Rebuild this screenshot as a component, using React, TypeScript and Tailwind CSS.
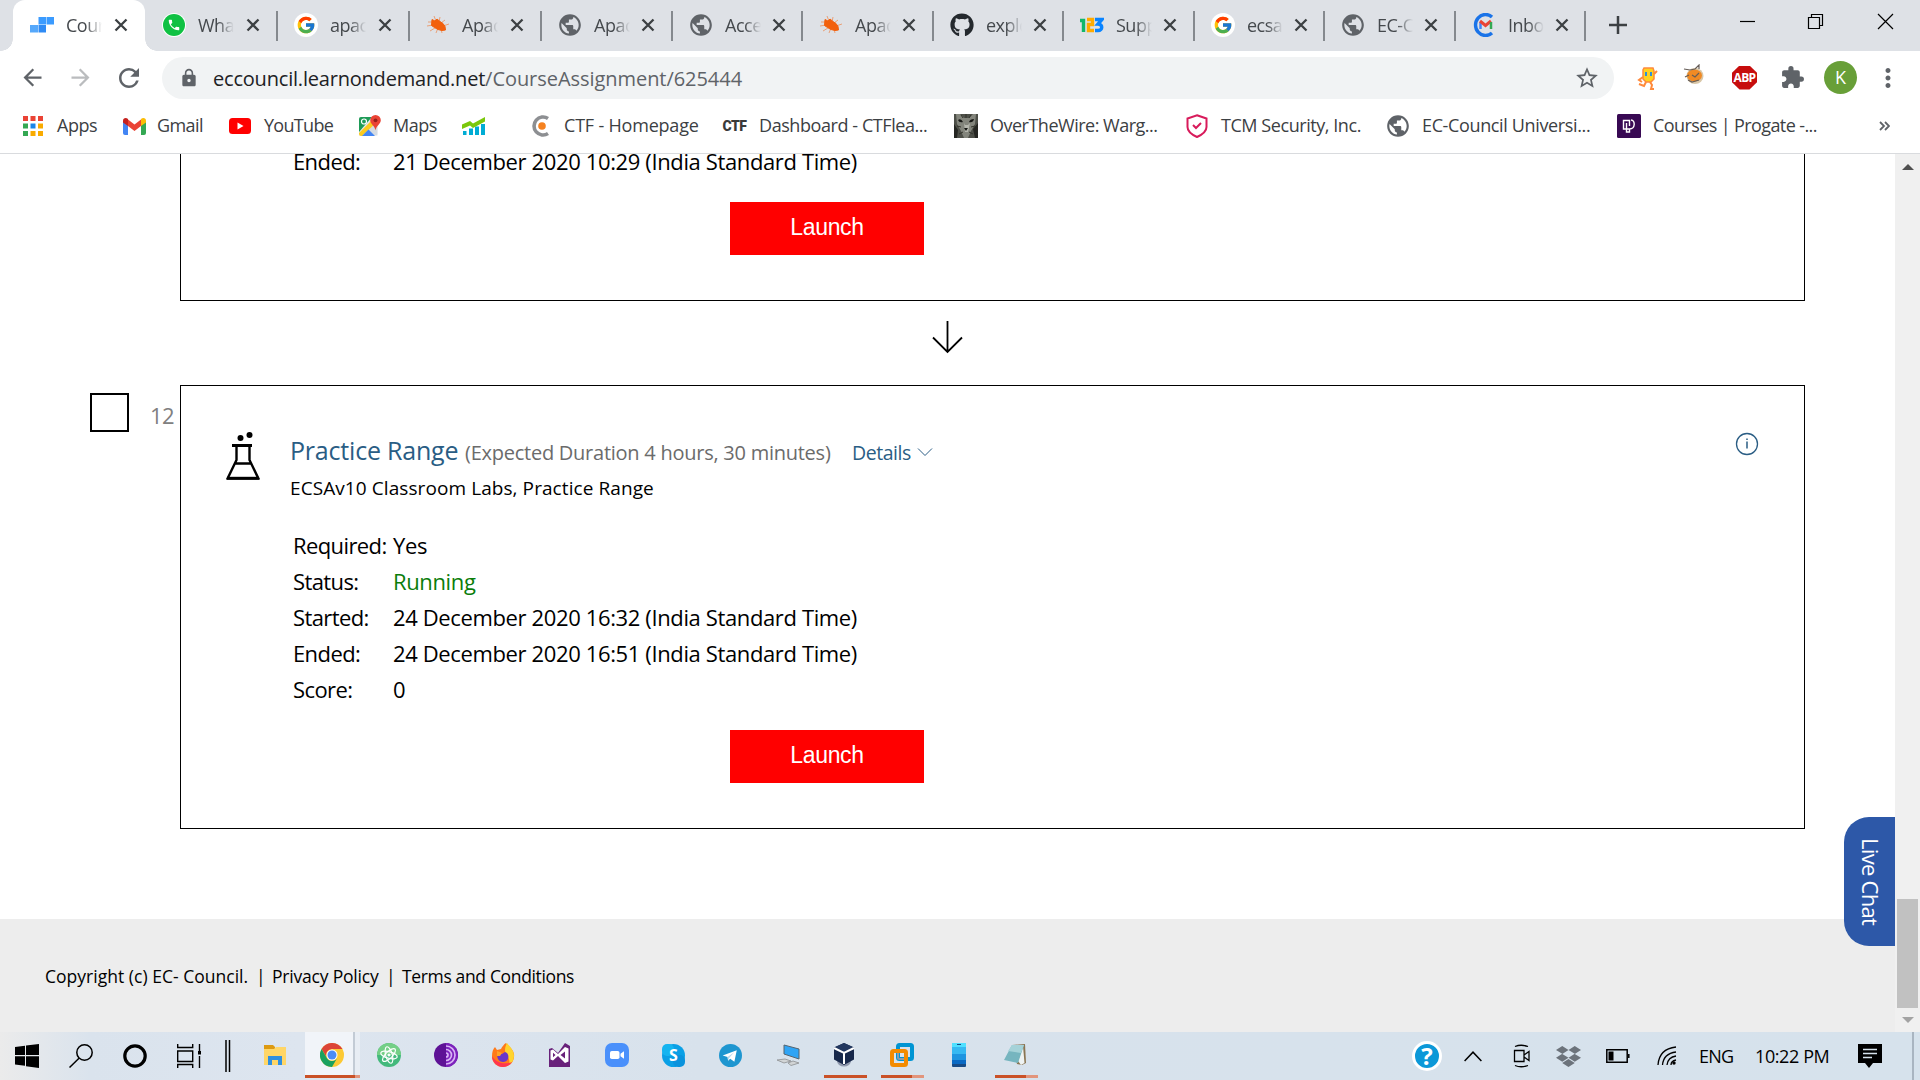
import React from 'react';
import { FaGithub, FaDropbox } from 'react-icons/fa';
import { FcGoogle } from 'react-icons/fc';
import { MdArrowBack, MdArrowForward, MdRefresh, MdLock, MdStarBorder, MdMoreVert, MdPublic, MdExtension } from 'react-icons/md';

const Blocks = () => (
  <svg width="24" height="18" viewBox="0 0 24 18">
    <path d="M8.500 1H16v7.500H8.500zM16.500 1H24v7.500h-7.500z" fill="#3b9bff" />
    <path d="M8.500 9H16v7.500H8.500z" fill="#2f8bf5" />
    <path d="M0 9h8v7.500H0z" fill="#55a8fb" />
  </svg>
);
const WhatsApp = () => (
  <span className="flex size-[22px] items-center justify-center rounded-full bg-[#0fc143] ring-1 ring-white">
    <svg width="14" height="14" viewBox="0 0 24 24" fill="#fff"><path d="M6.6 10.8c1.4 2.8 3.8 5.1 6.6 6.6l2.2-2.2c.3-.3.7-.4 1-.2 1.1.4 2.300.6 3.600.6.6 0 1 .4 1 1V20c0 .6-.4 1-1 1C10.600 21 3 13.400 3 4c0-.6.4-1 1-1h3.500c.6 0 1 .4 1 1 0 1.200.2 2.400.6 3.600.1.3 0 .7-.2 1z" /></svg>
  </span>
);
const Google = () => (
  <span className="flex size-6 items-center justify-center rounded-full bg-white"><FcGoogle size={20} /></span>
);
const Mite = () => (
  <svg width="24" height="24" viewBox="0 0 24 24" fill="#f2600c" stroke="#f2600c">
    <path d="M6 6.500l3 1.500 2-2 3 2.500 3 2 2 3 .5 3.500-3.500.5-4-1-3.500-2-3-2z" strokeWidth="1" />
    <path d="M2 9h5M1 13l6-1M4 18l5-3M10 20l2-5M8 3l2 5M14 4l-1 5M19 7l-4 3M23 11l-6 2M16 20l-1-4" strokeWidth="1" opacity=".5" fill="none" />
  </svg>
);
const Globe = () => <MdPublic size={26} color="#5f6368" className="shrink-0" />;
const OneTwoThree = () => (
  <svg width="24" height="16" viewBox="0 0 24 16" fill="none" strokeWidth="3.400">
    <path d="M0 3.500h3.500V15" stroke="#12b76a" />
    <path d="M7 2.500h5.500v5H8.500v6H14" stroke="#ffab00" />
    <path d="M15 2.500h7l-4 4.500c5 0 5 6.500 0 6.500h-3" stroke="#0a84ff" />
  </svg>
);
const ClientMail = () => (
  <svg width="22" height="24" viewBox="0 0 22 24" fill="none">
    <path d="M19 4a10 10.500 0 1 0 0 16" stroke="#1a73e8" strokeWidth="3.400" />
    <path d="M7.500 16V9" stroke="#4285f4" strokeWidth="2.500" />
    <path d="M7 8l5.500 4.500L18 8" stroke="#ea4335" strokeWidth="3" />
    <path d="M18 16V9" stroke="#34a853" strokeWidth="2.500" />
  </svg>
);
const Close = () => (
  <svg width="14" height="14" viewBox="0 0 14 14" fill="none" stroke="#3c4043" strokeWidth="2.300"><path d="M1.500 1.500l11 11M12.500 1.500l-11 11" /></svg>
);

const tabs = [
  { t: 'Cours', icon: <Blocks />, w: 'w-[132px]', active: true },
  { t: 'What', icon: <WhatsApp />, w: 'w-[132px]' },
  { t: 'apach', icon: <Google />, w: 'w-[132px]' },
  { t: 'Apach', icon: <Mite />, w: 'w-[132px]' },
  { t: 'Apach', icon: <Globe />, w: 'w-[131px]' },
  { t: 'Acces', icon: <Globe />, w: 'w-[130px]' },
  { t: 'Apach', icon: <Mite />, w: 'w-[131px]' },
  { t: 'explo', icon: <FaGithub size={24} color="#24292e" />, w: 'w-[130px]' },
  { t: 'Supp', icon: <OneTwoThree />, w: 'w-[131px]' },
  { t: 'ecsa', icon: <Google />, w: 'w-[130px]' },
  { t: 'EC-C', icon: <Globe />, w: 'w-[131px]' },
  { t: 'Inbox', icon: <ClientMail />, w: 'w-[130px]' },
];

function TabStrip() {
  return (
    <div className="flex h-[51px] bg-[#dee1e6] pl-[13px]">
      {tabs.map((tab, i) => (
        <div
          key={i}
          className={`${tab.w} relative flex shrink-0 items-center ${tab.active ? 'rounded-t-[12px] bg-white' : ''}`}
        >
          {tab.active && (
            <>
              <i className="absolute -left-3 bottom-0 size-3 bg-[radial-gradient(circle_at_0_0,transparent_11.500px,#fff_12px)]" />
              <i className="absolute -right-3 bottom-0 size-3 bg-[radial-gradient(circle_at_100%_0,transparent_11.500px,#fff_12px)]" />
            </>
          )}
          <span className="ml-[15px] flex w-[27px] shrink-0 justify-center pb-px">{tab.icon}</span>
          <span className="ml-[11px] w-[36px] overflow-hidden pb-[2px] text-[18px] leading-6 tracking-[-0.500px] whitespace-nowrap text-[#45494d] [mask-image:linear-gradient(to_right,#000_55%,transparent)]">
            {tab.t}
          </span>
          <span className={`mb-px flex shrink-0 ${i > 3 ? 'ml-[11px]' : 'ml-[12px]'}`}><Close /></span>
          {!tab.active && <i className="absolute -right-px top-[11px] h-[30px] w-[2px] bg-[#85898e]" />}
        </div>
      ))}
      <svg className="mt-[16px] ml-[24px]" width="18" height="18" viewBox="0 0 18 18" stroke="#3c4043" strokeWidth="2.500"><path d="M9 0v18M0 9h18" /></svg>
      <svg className="mt-[12px] mr-[26px] ml-auto" width="154" height="20" viewBox="0 0 154 20" fill="none" stroke="#000" strokeWidth="1.200">
        <path d="M0 9.500h15" />
        <path d="M68.500 5.500h11v11h-11zM71.500 5.500v-3h11v11h-3" />
        <path d="M138 2l15 15M153 2l-15 15" />
      </svg>
    </div>
  );
}

const Runner = () => (
  <svg width="22" height="24" viewBox="0 0 22 24">
    <path d="M7 2h9l1 3v8l-3 3H9l-3-3V4z" fill="#ffd21f" stroke="#ff8a3c" strokeWidth="1.500" />
    <path d="M8 6h2v4H8zM13 6h2v4h-2z" fill="#2f8fd8" />
    <path d="M17 8l3-3M6 11l-4 3 3 2M9 16l-2 4-5-2M13 16l2 3-1 4h3" fill="none" stroke="#ff8a3c" strokeWidth="2" />
  </svg>
);
const CookieBug = () => (
  <svg width="22" height="22" viewBox="0 0 22 22">
    <ellipse cx="12" cy="12" rx="8.500" ry="8" fill="#d9c7a8" />
    <ellipse cx="11.500" cy="11.500" rx="7.500" ry="6" fill="#f08a24" />
    <path d="M1 5l6 1 5-1 4-4v4M2 13l4-2M5 16l4 2 7-2M9 11l3 2 4-4" stroke="#665d57" strokeWidth="1.200" fill="none" />
  </svg>
);

function Toolbar() {
  return (
    <div className="flex h-[53px] items-center pl-[19px] text-[#5f6368]">
      <MdArrowBack size={27} className="shrink-0" />
      <MdArrowForward size={27} className="ml-[21px] shrink-0 text-[#babcbe]" />
      <MdRefresh size={30} className="ml-[20px] shrink-0" />
      <div className="mt-px ml-[18px] flex h-[42px] w-[1452px] shrink-0 items-center rounded-full bg-[#f1f3f4] pl-[17px]">
        <MdLock size={20} />
        <span className="ml-[14px] pt-[2px] text-[20px] leading-7 whitespace-nowrap">
          <span className="tracking-[-0.200px] text-[#202124]">eccouncil.learnondemand.net</span>
          <span className="tracking-[-0.050px]">/CourseAssignment/625444</span>
        </span>
        <MdStarBorder size={26} className="mr-[14px] ml-auto" />
      </div>
      <div className="ml-[23px] flex w-[22px] shrink-0"><Runner /></div>
      <div className="-mt-[5px] ml-[24px] flex w-[22px] shrink-0"><CookieBug /></div>
      <span className="ml-[27px] flex h-6 w-[25px] shrink-0 items-center justify-center bg-[#c70d0d] text-[12px] font-bold tracking-[-0.600px] text-white [clip-path:polygon(30%_0,70%_0,100%_30%,100%_70%,70%_100%,30%_100%,0_70%,0_30%)]">
        ABP
      </span>
      <MdExtension size={25} className="ml-[23px] shrink-0" />
      <span className="ml-[19px] flex size-[33px] shrink-0 items-center justify-center rounded-full bg-[#689f38] text-[18px] text-white">K</span>
      <MdMoreVert size={30} className="ml-[16px] shrink-0" />
    </div>
  );
}

const AppsGrid = () => {
  const c = ['#ea4335', '#ea4335', '#ea4335', '#34a853', '#1a85e8', '#f9ab00', '#34a853', '#f9ab00', '#f9ab00'];
  return (
    <svg width="20" height="20" viewBox="0 0 20 20">
      {c.map((f, i) => <rect key={i} x={(i % 3) * 7.5} y={Math.floor(i / 3) * 7.5} width="5" height="5" fill={f} />)}
    </svg>
  );
};
const GmailLogo = () => (
  <svg width="23" height="17" viewBox="0 0 23 17">
    <path d="M0 3h5v14H2a2 2 0 0 1-2-2z" fill="#4285f4" />
    <path d="M18 3h5v12a2 2 0 0 1-2 2h-3z" fill="#34a853" />
    <path d="M5 1.500L11.500 6.500 18 1.500V8l-6.500 5L5 8z" fill="#ea4335" />
    <path d="M0 2.500C0 0 3-.8 5 1v7L0 4.500z" fill="#c5221f" />
    <path d="M23 2.500C23 0 20-.8 18 1v7l5-3.500z" fill="#fbbc04" />
  </svg>
);
const YouTubeLogo = () => (
  <svg width="22" height="16" viewBox="0 0 22 16"><rect width="22" height="16" rx="3.500" fill="#f00" /><path d="M8.500 4.500v7l6-3.500z" fill="#fff" /></svg>
);
const MapsLogo = () => (
  <svg width="23" height="22" viewBox="0 0 23 22">
    <rect x="1" y="2" width="19" height="19" rx="2" fill="#e8eaed" />
    <path d="M1 4q0-2 2-2h11L1 17z" fill="#1e9b57" />
    <path d="M1 18L14 5l4 5L5 21H3q-2 0-2-2z" fill="#fbcb1f" />
    <path d="M5 20L19 7v13z" fill="#d5dbe2" />
    <path d="M4 21l6.500-6.500L17 21z" fill="#4285f4" />
    <circle cx="6" cy="6.500" r="2.500" fill="none" stroke="#fff" strokeWidth="1.200" />
    <path d="M17.500 0a5.300 5.300 0 0 1 5.300 5.300c0 3.500-4.500 5.700-5.300 10-.8-4.300-5.300-6.500-5.300-10A5.300 5.300 0 0 1 17.500 0z" fill="#ea4335" />
    <circle cx="17.500" cy="5.300" r="1.900" fill="#96201b" />
  </svg>
);
const BarsLogo = () => (
  <svg width="23" height="19" viewBox="0 0 23 19">
    <path d="M1 14h3.500v4H1zM7 11.500h4V18H7zM13 9.500h4V18h-4zM19 7h4v11h-4z" fill="#00acd4" />
    <path d="M0 12V7.500l8-3.500 3 2.500L23 0v4.500L11 11 8 8.500z" fill="#7bc80c" />
  </svg>
);
const CtfC = () => (
  <svg width="22" height="22" viewBox="0 0 22 22">
    <path d="M18 3.500a9 9 0 1 0 0 15" fill="none" stroke="#8d8f92" strokeWidth="3.600" />
    <circle cx="12" cy="11" r="3.800" fill="#f58220" />
  </svg>
);
const CtfWord = () => <span className="font-['Roboto'] text-[14px] font-black tracking-[-0.500px] text-[#3a3a3a]">CTF</span>;
const Cat = () => (
  <svg width="24" height="24" viewBox="0 0 24 24">
    <rect width="24" height="24" fill="#4d4f48" />
    <path d="M2 0h4l4 4h5l4-4h3l-1 10-4 7-3 7h-4l-3-7-4-7z" fill="#83857c" />
    <path d="M0 10l4 6-1 8H0zM24 9l-5 6 2 9h3z" fill="#252622" />
    <path d="M10 9l1 9h3l2-9-2 2h-3z" fill="#b4b6ad" />
    <path d="M4 6q3-2 5 2-4 1-5-2zM20 5q-4 0-5 3 4 1 5-3zM10 14h4l-2 3z" fill="#161714" />
    <path d="M7 1l2 3M12 0v4M17 1l-2 3M5 20l4-2M19 20l-4-2M3 12l4 1M21 12l-4 1" stroke="#32332b" />
  </svg>
);
const Shield = () => (
  <svg width="22" height="24" viewBox="0 0 22 24" fill="none" stroke="#d81b5b" strokeWidth="2">
    <path d="M11 1.200l9.500 3.300v8.500c0 4.500-4 7.500-9.500 10C5.500 20.500 1.500 17.500 1.500 13V4.500z" />
    <path d="M7 11l3 3 5-5" />
  </svg>
);
const Progate = () => (
  <svg width="24" height="24" viewBox="0 0 24 24" fill="none" stroke="#fff" strokeWidth="1.400">
    <rect width="24" height="24" rx="1.500" fill="#380953" stroke="none" />
    <path d="M12.500 12V6.500h-6V15h6c6 0 6-9 1.500-9M9.500 9v9h3v-3" />
  </svg>
);

const marks = [
  { t: 'Apps', i: <AppsGrid />, b: 'w-[20px] ml-[23px]', s: 'ml-[14px] w-[40px] tracking-[-0.500px]' },
  { t: 'Gmail', i: <GmailLogo />, b: 'w-[23px] ml-[26px]', s: 'ml-[11px] w-[47px] tracking-[-0.580px]' },
  { t: 'YouTube', i: <YouTubeLogo />, b: 'w-[22px] ml-[25px]', s: 'ml-[13px] w-[70px] tracking-[-0.700px]' },
  { t: 'Maps', i: <MapsLogo />, b: 'w-[23px] ml-[24px]', s: 'ml-[12px] w-[45px] tracking-[-0.450px]' },
  { t: '', i: <BarsLogo />, b: 'w-[23px] ml-[24px]', s: 'w-[20px]' },
  { t: 'CTF - Homepage', i: <CtfC />, b: 'w-[22px] ml-[25px]', s: 'ml-[12px] w-[136px] tracking-[-0.200px]' },
  { t: 'Dashboard - CTFlea...', i: <CtfWord />, b: 'w-[25px] ml-[22px]', s: 'ml-[12px] w-[170px] tracking-[-0.430px]' },
  { t: 'OverTheWire: Warg...', i: <Cat />, b: 'w-[24px] ml-[25px]', s: 'ml-[12px] w-[169px] tracking-[-0.500px]' },
  { t: 'TCM Security, Inc.', i: <Shield />, b: 'w-[22px] ml-[27px]', s: 'ml-[13px] w-[141px] tracking-[-0.440px]' },
  { t: 'EC-Council Universi...', i: <Globe />, b: 'w-[22px] ml-[25px]', s: 'ml-[13px] w-[170px] tracking-[-0.360px]' },
  { t: 'Courses | Progate -...', i: <Progate />, b: 'w-[24px] ml-[25px]', s: 'ml-[12px] w-[166px] tracking-[-0.600px]' },
];

function Bookmarks() {
  return (
    <div className="flex h-[50px] items-center border-b border-[#d9dbde] pb-[5px] text-[18px] leading-6 text-[#3c4043]">
      {marks.map((m, k) => (
        <React.Fragment key={k}>
          <span className={`flex shrink-0 justify-center ${m.b}`}>{m.i}</span>
          <span className={`shrink-0 pb-[2px] whitespace-nowrap ${m.s}`}>{m.t}</span>
        </React.Fragment>
      ))}
      <svg className="mr-[30px] ml-auto" width="11" height="10" viewBox="0 0 11 10" fill="none" stroke="#5f6368" strokeWidth="1.800">
        <path d="M1 1l4 4-4 4M6 1l4 4-4 4" />
      </svg>
    </div>
  );
}

function Row({ k, v, green }: { k: string; v: string; green?: boolean }) {
  return (
    <div className="flex h-9 items-center pl-[3px] text-[22px] tracking-[-0.370px] whitespace-nowrap">
      <span className="w-[100px] tracking-[-0.600px]">{k}</span>
      <span className={green ? 'text-[#0a7d0a]' : ''}>{v}</span>
    </div>
  );
}

const Launch = () => (
  <button className="ml-[440px] block h-[53px] w-[194px] shrink-0 bg-[#ff0000] pb-[2px] font-['Liberation_Sans'] text-[23px] tracking-[-0.300px] text-white">
    Launch
  </button>
);

const Flask = () => (
  <svg width="34" height="48" viewBox="0 0 34 48" fill="none" stroke="#000" strokeWidth="2.400">
    <circle cx="14.500" cy="6" r="3" fill="#000" stroke="none" />
    <circle cx="23.500" cy="3" r="3" fill="#000" stroke="none" />
    <path d="M6 13.500h20" strokeWidth="3" />
    <path d="M10.500 14v14L1.700 46.300h30.600L23.500 28V14M8.500 31.500h17" />
    <path d="M1 46.300h32" strokeWidth="3" />
  </svg>
);

function Page() {
  return (
    <div className="relative flex h-[878px] overflow-hidden bg-white text-black">
      <div className="flex w-[1895px] flex-col">
        <div className="ml-[180px] h-[147px] w-[1625px] shrink-0 border border-t-0 border-black pl-[109px]">
          <div className="-mt-[11px]"><Row k="Ended:" v="21 December 2020 10:29 (India Standard Time)" /></div>
          <div className="mt-[23px]"><Launch /></div>
        </div>
        <div className="flex h-[84px] shrink-0 items-center pl-[932px]">
          <svg className="-mt-[12px]" width="32" height="34" viewBox="0 0 32 34" fill="none" stroke="#000" strokeWidth="1.800">
            <path d="M15.500 1v31M1 17.500L15.500 32 30 17.500" />
          </svg>
        </div>
        <div className="flex shrink-0">
          <span className="mt-[8px] ml-[90px] size-[39px] border-2 border-black" />
          <span className="mt-[12px] ml-[21px] w-[30px] text-[22px] leading-9 tracking-[-0.600px] text-[#808080]">12</span>
          <div className="flex h-[444px] w-[1625px] border border-black pt-[46px] pl-[45px]">
            <div className="w-[64px] shrink-0"><Flask /></div>
            <div className="grow">
              <div className="flex h-9 items-baseline leading-9 whitespace-nowrap">
                <span className="w-[175px] text-[25px] tracking-[-0.200px] text-[#2a5d84]">Practice Range</span>
                <span className="w-[387px] text-[20px] tracking-[-0.250px] text-[#6b6b6b]">(Expected Duration 4 hours, 30 minutes)</span>
                <span className="text-[19.500px] tracking-[-0.450px] text-[#2a5d84]">Details</span>
                <svg className="ml-[6px]" width="16" height="12" viewBox="0 0 16 12" fill="none" stroke="#2a5d84"><path d="M1 .5l7 7 7-7" /></svg>
              </div>
              <div className="mt-[5px] h-[30px] text-[19px] leading-[30px] tracking-[0.080px]">ECSAv10 Classroom Labs, Practice Range</div>
              <div className="mt-6">
                <Row k="Required:" v="Yes" />
                <Row k="Status:" v="Running" green />
                <Row k="Started:" v="24 December 2020 16:32 (India Standard Time)" />
                <Row k="Ended:" v="24 December 2020 16:51 (India Standard Time)" />
                <Row k="Score:" v="0" />
              </div>
              <div className="mt-[23px]"><Launch /></div>
            </div>
            <svg className="mr-[45px]" width="24" height="24" viewBox="0 0 24 24" fill="none" stroke="#2a5d84">
              <circle cx="12" cy="12" r="10.500" strokeWidth="1.300" />
              <path d="M12 9.500v7M12 6.500v1.500" strokeWidth="1.500" />
            </svg>
          </div>
        </div>
        <footer className="mt-auto flex h-[113px] shrink-0 items-center bg-[#ededed] pt-[2px] pl-[45px] text-[17.500px] whitespace-nowrap">
          <span className="w-[211px] tracking-[0.020px]">Copyright (c) EC- Council.</span>
          <span className="w-[16px]">|</span>
          <span className="w-[114px] tracking-[-0.200px]">Privacy Policy</span>
          <span className="w-[16px]">|</span>
          <span className="tracking-[-0.350px]">Terms and Conditions</span>
        </footer>
      </div>
      <div className="flex w-[25px] flex-col items-center bg-[#f0f0f0]">
        <svg className="mt-[10px]" width="12" height="6"><path d="M6 0l6 6H0z" fill="#505050" /></svg>
        <div className="mt-auto h-[109px] w-[21px] bg-[#c1c1c1]" />
        <svg className="mt-[9px] mb-[9px]" width="12" height="6"><path d="M0 0h12L6 6z" fill="#a3a3a3" /></svg>
      </div>
      <div className="absolute top-[663px] right-[25px] flex h-[129px] w-[51px] items-center justify-center rounded-l-[25px] bg-[#2d58a8] text-[22px] leading-none font-medium tracking-[-0.700px] text-white [writing-mode:vertical-rl]">
        <span className="pl-[2px]">Live Chat</span>
      </div>
    </div>
  );
}

const Explorer = () => (
  <svg width="24" height="26" viewBox="0 0 24 26"><path d="M1 5V3h9l2 2v3H1z" fill="#dd9a12" /><path d="M1 7h10l2-2h10v18H1z" fill="#ffd667" /><path d="M5 14h14v9h-4v-5H9v5H5z" fill="#2f8fe0" /></svg>
);
const Chrome = () => (
  <svg width="24" height="24" viewBox="0 0 24 24">
    <circle cx="12" cy="12" r="12" fill="#fcc934" />
    <path d="M1.600 6A12 12 0 0 1 22.400 6H12a6 6 0 0 0-5.500 8z" fill="#dc4437" />
    <path d="M1.600 6A12 12 0 0 0 12 24l5.200-9A6 6 0 0 1 6.800 15z" fill="#1aa15f" />
    <circle cx="12" cy="12" r="5.500" fill="#fff" /><circle cx="12" cy="12" r="4.500" fill="#4b8bf4" />
  </svg>
);
const Atom = () => (
  <svg width="24" height="24" viewBox="0 0 24 24" fill="none" stroke="#fff" strokeWidth="1.200">
    <circle cx="12" cy="12" r="12" fill="#43b97c" stroke="none" />
    <path d="M0 12a12 12 0 0 1 24 0z" fill="#74cf86" stroke="none" />
    <ellipse cx="12" cy="12" rx="3.300" ry="8.500" transform="rotate(-15 12 12)" />
    <ellipse cx="12" cy="12" rx="3.300" ry="8.500" transform="rotate(45 12 12)" />
    <ellipse cx="12" cy="12" rx="3.300" ry="8.500" transform="rotate(105 12 12)" />
    <circle cx="12" cy="12" r="1" fill="#fff" />
  </svg>
);
const Tor = () => (
  <svg width="24" height="24" viewBox="0 0 24 24" fill="none" stroke="#d9b3f5" strokeWidth="1.700">
    <circle cx="12" cy="12" r="12" fill="#5e1296" stroke="none" />
    <path d="M12 0a12 12 0 0 1 0 24z" fill="#7d22bd" stroke="none" />
    <path d="M12 3a9 9 0 0 1 0 18M12 6.500a5.500 5.500 0 0 1 0 11M12 10a2 2 0 0 1 0 4" />
  </svg>
);
const Firefox = () => (
  <svg width="24" height="25" viewBox="0 0 24 25">
    <path d="M1 13c0-4 1-7 3-9l2 3 4-1c1-2 3-5 5-6 2 3 7 6 8 11 1 8-5 13-11 13S1 20 1 13z" fill="#ff7a1a" />
    <path d="M16 0c2 3 7 7 7 13 0 4-2 7-5 9 2-8-4-9-4-15 0-3 1-5 2-7z" fill="#ffd42e" />
    <path d="M1 13c0 6 5 11 11 11 4 0 7-2 9-5-7 3-16 1-20-6z" fill="#ff3650" />
    <path d="M7 10l4 1 3-2c3 1 4 4 3 7-2 4-8 4-10 0-1-2-1-4 0-6z" fill="#6a35c9" />
    <path d="M6 8l5 2-2 3H6z" fill="#ffa227" />
  </svg>
);
const VisualStudio = () => (
  <svg width="23" height="24" viewBox="0 0 23 24">
    <path d="M1 6l3-1 6 5L17 0l5 3v21H1z" fill="#68217a" />
    <path d="M2.500 7.500L5 6.500l5 4.500 7-7 3.500 1.500v13L17 20l-7-7-5 4.500-2.500-1z" fill="#fff" />
    <path d="M5 9.700v4.600l2.500-2.300zM17 8.500L12.500 12l4.500 3.500z" fill="#68217a" />
  </svg>
);
const Zoom = () => (
  <svg width="24" height="24" viewBox="0 0 24 24"><rect width="24" height="24" rx="7" fill="#4a90fb" /><rect x="5" y="8" width="9.500" height="8" rx="1.800" fill="#fff" /><path d="M15.500 10.800L19 8.300v7.400l-3.500-2.500z" fill="#fff" /></svg>
);
const Skype = () => (
  <span className="relative flex size-[23px] items-center justify-center rounded-full bg-[#0aa0e6] text-[16px] leading-none font-bold text-white">
    <i className="absolute top-0 left-0 size-3 rounded-[5px] bg-[#14b4f0]" />
    <i className="absolute right-0 bottom-0 size-3 rounded-[5px] bg-[#0a93dd]" />
    <span className="relative">S</span>
  </span>
);
const Telegram = () => (
  <svg width="23" height="23" viewBox="0 0 22 22"><circle cx="11" cy="11" r="11" fill="#1e96d0" /><path d="M3.500 11L17 6l-2.300 11-4-3-2 2-.5-3.500z" fill="#fff" /><path d="M8.200 12.500L14.500 8l-4.800 5.500-1 2.500z" fill="#b9d9ec" /></svg>
);
const Computer = () => (
  <svg width="24" height="22" viewBox="0 0 24 22"><path d="M8 1l15 4v10L8 10z" fill="#2fa4f5" stroke="#56646f" /><path d="M1 16l8-1 6 2-7 2zM12 19l5-2 6 2-8 2.500z" fill="#d2d5d6" stroke="#8b8e90" strokeWidth=".8" /></svg>
);
const VBox = () => (
  <svg width="22" height="24" viewBox="0 0 22 24"><ellipse cx="11" cy="18" rx="7" ry="5.500" fill="#8f98ac" /><path d="M11 0l10 4.500v12L11 22 1 16.500v-12z" fill="#17284a" /><path d="M11 0l10 4.500-10 5-10-5z" fill="#22375f" /><path d="M1 5l10 5 10-5M11 10v11" stroke="#fff" strokeWidth="2" fill="none" /></svg>
);
const VMware = () => (
  <svg width="24" height="24" viewBox="0 0 24 24" fill="none" strokeWidth="4"><rect x="8" y="2" width="14" height="14" rx="1.500" stroke="#0095d3" /><rect x="2" y="8" width="14" height="14" rx="1.500" stroke="#f38b00" /><path d="M8 10v4.500q0 1.500 1.500 1.500H14" stroke="#8b9daa" strokeWidth="2" /></svg>
);
const Phone = () => (
  <svg width="14" height="24" viewBox="0 0 14 24"><rect width="14" height="24" rx="1" fill="#174b86" /><path d="M0 1h14v20H0z" fill="#0a6ac4" /><path d="M0 1h14v16H0z" fill="#1e95e0" /><path d="M0 1h14v10H0z" fill="#36b9f2" /><path d="M0 0h14v4H0z" fill="#4fe0ff" /><path d="M5 1.500h4" stroke="#174b86" /></svg>
);
const Notepad = () => (
  <svg width="25" height="24" viewBox="0 0 25 24"><path d="M9 2l13-1 1 19-4 2-5-1z" fill="#8a7552" /><path d="M20 3l1.500 17-3.500 2-3-4z" fill="#eef3f3" /><path d="M9 2h12l-6 18-14-3z" fill="#76b5bf" /><path d="M9 2h12l-3 8-13-2z" fill="#a5d2d8" /></svg>
);

const pinned: { el: React.ReactNode; hl?: boolean; bar?: 'full' | 'split' }[] = [
  { el: <Explorer /> },
  { el: <Chrome />, hl: true },
  { el: <Atom /> },
  { el: <Tor /> },
  { el: <Firefox /> },
  { el: <VisualStudio /> },
  { el: <Zoom /> },
  { el: <Skype /> },
  { el: <Telegram /> },
  { el: <Computer /> },
  { el: <VBox />, bar: 'full' },
  { el: <VMware />, bar: 'split' },
  { el: <Phone /> },
  { el: <Notepad />, bar: 'split' },
];

function Taskbar() {
  return (
    <div className="flex h-[48px] items-center bg-[linear-gradient(to_right,#ebebeb,#dae3ed_90px,#dde5ef_300px,#d8e2ec_700px,#d6e2ec)]">
      <svg className="ml-[15px]" width="24" height="24" viewBox="0 0 24 24"><path d="M0 3l10-1.300V11H0zM11 1.500L24 0v11H11zM0 12.200h10v9.500L0 20.500zM11 12.200h13V24l-13-1.800z" /></svg>
      <svg className="ml-[30px]" width="24" height="24" viewBox="0 0 24 24" fill="none" stroke="#000" strokeWidth="1.500"><circle cx="15.500" cy="8.500" r="7.700" /><path d="M10 14.300L.5 23.500" /></svg>
      <svg className="ml-[30px]" width="24" height="24" viewBox="0 0 24 24" fill="none" stroke="#000" strokeWidth="3.200"><circle cx="12" cy="12" r="10.200" /></svg>
      <svg className="ml-[30px]" width="24" height="24" viewBox="0 0 24 24" fill="none" stroke="#000" strokeWidth="1.400"><path d="M.7 0v3.500h15V0M.7 7h15v10.500h-15zM.7 24v-3.500h15V24M22.500 0v7M22.500 12v12" /><path d="M21 7h3v3.500h-3z" fill="#000" stroke="none" /></svg>
      <svg className="ml-[24px]" width="6" height="32" viewBox="0 0 6 32"><path d="M1 0v32M4.500 0v32" stroke="#000" strokeWidth="1.500" /></svg>
      <div className="ml-[17px] flex h-full">
        {pinned.map((p, i) => (
          <div key={i} className="relative flex h-full w-[57px] shrink-0 items-center justify-center">
            {p.hl && (
              <span className="absolute inset-y-0 left-0 mb-[2px] flex w-[55px] flex-col">
                <span className="flex grow"><i className="w-[48px] bg-[#f1f4f9]" /><i className="w-[2px] bg-[#c3cbd5]" /><i className="w-[5px] bg-[#e8edf4]" /></span>
                <span className="flex h-[3px]"><i className="w-[50px] bg-[#ca5127]" /><i className="w-[5px] bg-[#e2957c]" /></span>
              </span>
            )}
            <span className={`relative flex pb-[2px] ${p.hl ? 'mr-[3px]' : i === 10 ? 'mr-[6px]' : 'mr-[4px]'}`}>{p.el}</span>
            {p.bar && (
              <span className="absolute bottom-[2px] left-[6px] flex h-[3px] w-[43px]">
                <i className={p.bar === 'full' ? 'w-[43px] bg-[#ca5127]' : 'w-[31px] bg-[#ca5127]'} />
                {p.bar === 'split' && <i className="w-[12px] bg-[#e2957c]" />}
              </span>
            )}
          </div>
        ))}
      </div>
      <span className="ml-auto flex size-[30px] items-center justify-center rounded-full border-[3px] border-white bg-[#0c98d8] text-[24px] leading-none font-bold text-white">?</span>
      <svg className="ml-[22px]" width="18" height="11" viewBox="0 0 18 11" fill="none" stroke="#000" strokeWidth="1.500"><path d="M.6 10L9 1.200 17.400 10" /></svg>
      <svg className="ml-[31px]" width="18" height="24" viewBox="0 0 18 24" fill="none" stroke="#000" strokeWidth="1.300"><path d="M1.500 6.500h9.500v11H1.500zM11 11l5-3.500v9L11 13M2 2.500q6-2.500 13 0M2 21.500q6 2.500 13 0" /></svg>
      <FaDropbox size={25} className="ml-[25px] text-[#6c737b]" />
      <svg className="ml-[25px]" width="24" height="14" viewBox="0 0 24 14" fill="none" stroke="#000" strokeWidth="1.500"><path d="M.8.8h20.400v12.400H.8zM22.800 5v4" /><path d="M2.500 2.500h5v9h-5z" fill="#000" stroke="none" /></svg>
      <svg className="ml-[27px]" width="20" height="20" viewBox="0 0 20 20" fill="none" stroke="#000" strokeWidth="1.300"><path d="M1 19Q2 3 19 1M5.500 19Q6.500 7.500 19 6M10 19q1-8 9-9M14 19q0-4 5-5" /><circle cx="17" cy="17" r="1.700" fill="#000" stroke="none" /></svg>
      <span className="ml-[22px] w-[56px] text-[18px] tracking-[-0.800px]">ENG</span>
      <span className="w-[78px] text-[18px] tracking-[-0.400px] whitespace-nowrap">10:22 PM</span>
      <svg className="ml-[25px]" width="24" height="24" viewBox="0 0 24 24"><path d="M0 0h24v19h-9l-4 5-4-5H0z" /><path d="M5 5.500h14M5 9.500h14M5 13.500h9" stroke="#d6e2ec" strokeWidth="1.300" /></svg>
      <i className="mr-[6px] ml-[30px] h-full w-[2px] bg-[#a9b5c1]" />
    </div>
  );
}

export default function App() {
  return (
    <div className="flex h-[1080px] w-[1920px] flex-col overflow-hidden bg-white font-['Open_Sans','Noto_Sans',sans-serif]">
      <TabStrip />
      <Toolbar />
      <Bookmarks />
      <Page />
      <Taskbar />
    </div>
  );
}
